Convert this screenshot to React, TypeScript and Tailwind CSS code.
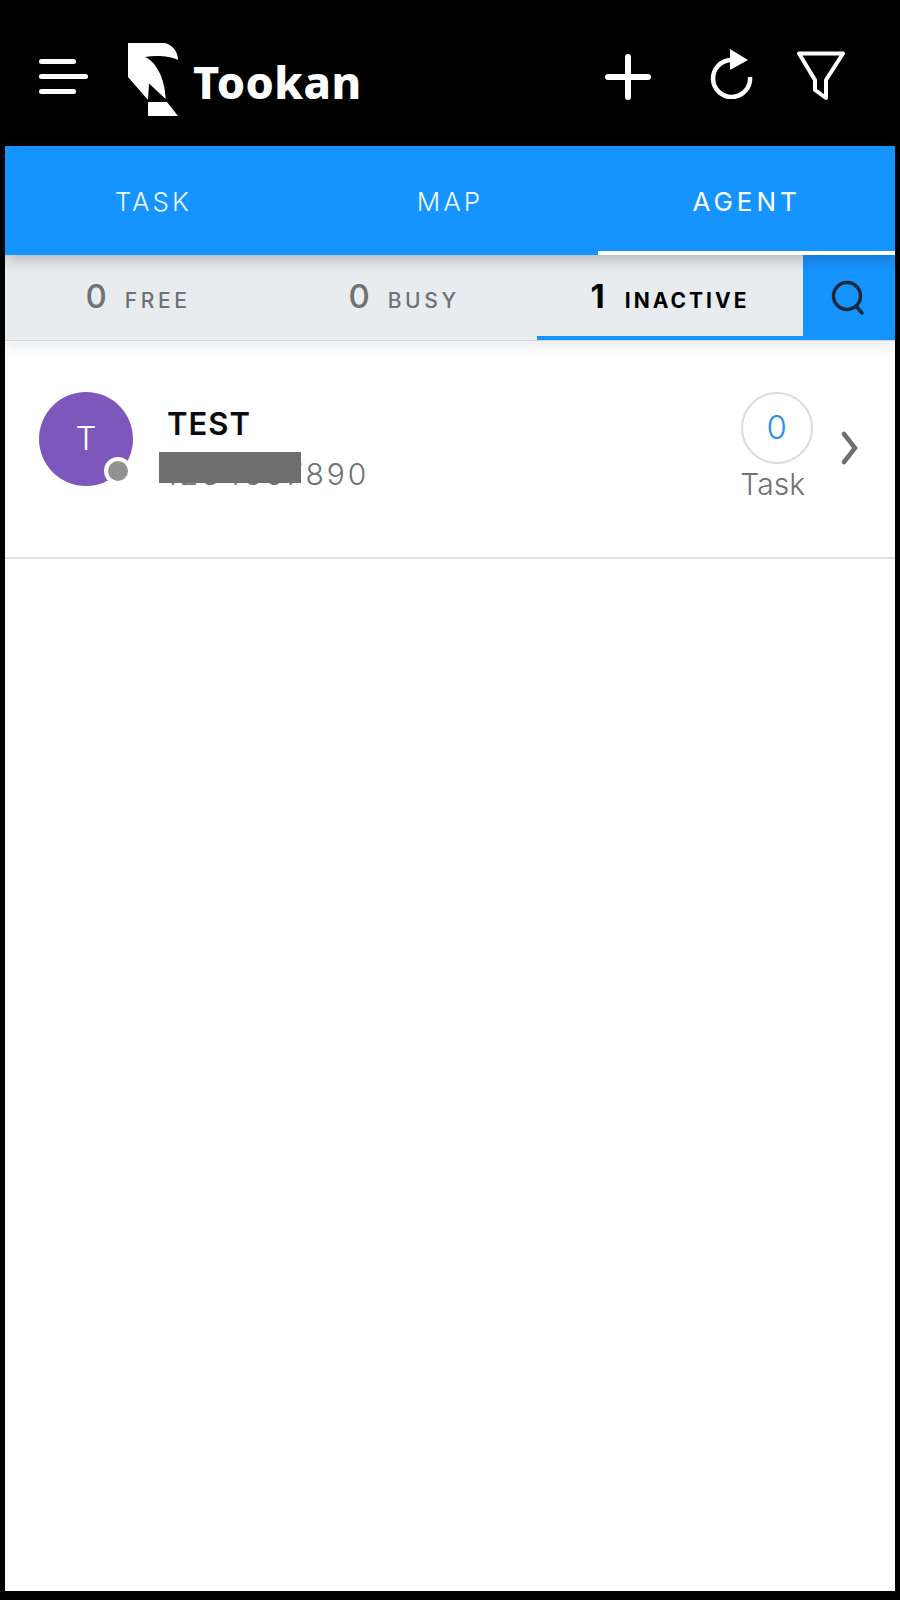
const tabs = [
  { label: "TASK", active: false },
  { label: "MAP", active: false },
  { label: "AGENT", active: true },
];

const filters = [
  { count: 0, label: "FREE", active: false },
  { count: 0, label: "BUSY", active: false },
  { count: 1, label: "INACTIVE", active: true },
];

const Logo = () => (
  <svg width="54" height="76" viewBox="0 0 54 76" className="shrink-0" fill="#fff">
    <path d="M0 0H37C45 2 50 9 50 17C42 13 28 12 17 14C27 18 37 34 37.700 56L21 40.500L20 57L0 34Z" />
    <path d="M20 59H39L50 73H20Z" />
  </svg>
);

const Plus = () => (
  <svg width="46" height="46" viewBox="0 0 46 46" stroke="#fff" strokeWidth="6" strokeLinecap="round">
    <path d="M3 23H43M23 3V43" />
  </svg>
);

const Refresh = () => (
  <svg width="44" height="50" viewBox="0 0 44 50" fill="none">
    <path d="M40 28A18.5 18.5 0 1 1 21 11" stroke="#fff" strokeWidth="4.5" />
    <path d="M20 0L38 11L20 21Z" fill="#fff" />
  </svg>
);

const Funnel = () => (
  <svg width="50" height="50" viewBox="0 0 50 50" fill="none" stroke="#fff" strokeWidth="4" strokeLinejoin="round">
    <path d="M3 2.500H47L30 29V47L19 39V29Z" />
  </svg>
);

const Search = () => (
  <svg width="36" height="36" viewBox="0 0 36 36" fill="none" stroke="#1f2a37" strokeWidth="3.500">
    <circle cx="16" cy="16" r="13.500" />
    <path d="M25 26L31 33" strokeLinecap="round" />
  </svg>
);

export default function App() {
  return (
    <div className="h-[1600px] bg-black px-[5px] pb-[9px] flex flex-col font-['Inter',sans-serif]">
      <header className="h-[146px] shrink-0 flex items-center -mx-[5px]">
        <div className="ml-[39px] mt-[6px] flex flex-col gap-[10px]">
          <div className="h-[5px] w-[37px] rounded-full bg-white" />
          <div className="h-[5px] w-[49px] rounded-full bg-white" />
          <div className="h-[5px] w-[37px] rounded-full bg-white" />
        </div>
        <div className="ml-[40px] mt-[16px] flex items-start">
          <Logo />
          <span className="ml-[11px] mt-[12px] text-[45px] leading-[54px] font-extrabold tracking-[0.5px] text-white font-['Noto_Sans',sans-serif]">
            Tookan
          </span>
        </div>
        <div className="ml-auto mt-[7px] flex items-center mr-[54px]">
          <Plus />
          <div className="ml-[59px] -mt-[5px]">
            <Refresh />
          </div>
          <div className="ml-[42px] -mt-[1px]">
            <Funnel />
          </div>
        </div>
      </header>

      <main className="flex-1 bg-white flex flex-col">
        <nav className="relative z-20 grid grid-cols-3 h-[109px] bg-[#1594ff] shadow-[0_4px_14px_rgba(40,50,60,0.3)]">
          {tabs.map((tab) => (
            <div
              key={tab.label}
              className={
                tab.active
                  ? "flex justify-center pt-[40px] border-b-4 border-white text-white text-[26px] leading-[32px] tracking-[4px] font-normal"
                  : "flex justify-center pt-[40px] text-[#f1f8ff] text-[26px] leading-[32px] tracking-[3px] font-light"
              }
            >
              {tab.label}
            </div>
          ))}
        </nav>

        <div className="relative z-10 flex h-[86px] bg-[#e9ecef] border-b border-[#d3d7db] shadow-[0_6px_12px_rgba(60,70,80,0.1)]">
          <div className="grid grid-cols-3 flex-1">
            {filters.map((item) => (
              <div
                key={item.label}
                className={
                  item.active
                    ? "flex items-baseline justify-center gap-[20px] pt-[21px] border-b-4 border-[#1594ff] text-black"
                    : "flex items-baseline justify-center gap-[18px] pt-[21px] text-[#6f7174]"
                }
              >
                <span className={item.active ? "text-[33px] leading-[40px] font-bold" : "text-[33px] leading-[40px] font-medium"}>
                  {item.count}
                </span>
                <span className={item.active ? "text-[21px] font-bold tracking-[3px]" : "text-[21px] font-medium tracking-[3.600px]"}>
                  {item.label}
                </span>
              </div>
            ))}
          </div>
          <div className="w-[92px] bg-[#1594ff] flex items-center justify-center">
            <Search />
          </div>
        </div>

        <section className="h-[218px] flex items-start pt-[51px] pl-[34px] border-b-2 border-[#dde1e6]">
          <div className="relative w-[94px] h-[94px] rounded-full bg-[#7e57bd] flex items-center justify-center text-white text-[33px] font-light">
            T
            <div className="absolute left-[65px] top-[65px] w-[28px] h-[28px] rounded-full bg-[#929292] border-[4px] border-white" />
          </div>
          <div className="ml-[34px] mt-[14px]">
            <div className="text-[31px] leading-[36px] font-semibold tracking-[1px] text-[#0b0b10]">TEST</div>
            <div className="relative mt-[14px] -ml-[2px] text-[30px] leading-[36px] font-light tracking-[3px] text-[#6e7277]">
              1234567890
              <div className="absolute -left-[6px] -top-[4px] w-[142px] h-[31px] bg-[#6f6f6f]" />
            </div>
          </div>
          <div className="ml-auto flex flex-col items-center">
            <div className="w-[72px] h-[72px] rounded-full border-2 border-[#d8dde2] flex items-center justify-center text-[33px] font-light text-[#2d8fe6]">
              0
            </div>
            <div className="mt-[2px] pr-[8px] text-[30px] leading-[36px] font-light text-[#6e7277]">Task</div>
          </div>
          <svg width="20" height="34" viewBox="0 0 20 34" fill="none" stroke="#6f6f6f" strokeWidth="4.500" strokeLinecap="round" className="ml-[27px] mr-[35px] mt-[39px]">
            <path d="M4 3L15 17L4 31" />
          </svg>
        </section>
      </main>
    </div>
  );
}
